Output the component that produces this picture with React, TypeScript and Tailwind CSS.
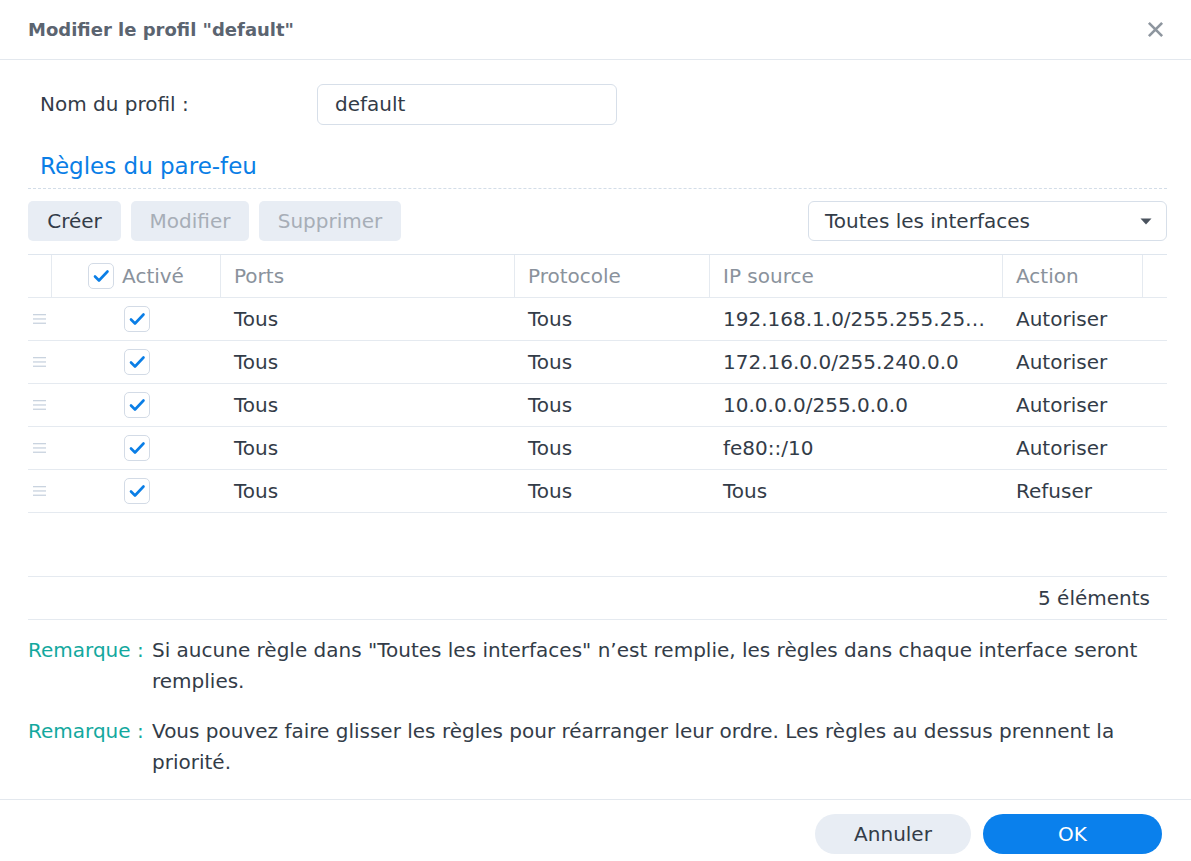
import React from "react";

const rows = [
  { ip: "192.168.1.0/255.255.25…", action: "Autoriser" },
  { ip: "172.16.0.0/255.240.0.0", action: "Autoriser" },
  { ip: "10.0.0.0/255.0.0.0", action: "Autoriser" },
  { ip: "fe80::/10", action: "Autoriser" },
  { ip: "Tous", action: "Refuser" },
];

function Check() {
  return (
    <span className="flex h-[26px] w-[26px] items-center justify-center rounded-[5px] border border-[#d3dbe6] bg-white">
      <svg width="18" height="18" viewBox="0 0 18 18">
        <path d="M3 9.5 L7 13.5 L15.5 4.5" fill="none" stroke="#0a7ee6" strokeWidth="2.6" strokeLinecap="round" strokeLinejoin="round" />
      </svg>
    </span>
  );
}

function Grip() {
  return (
    <svg width="14" height="12" viewBox="0 0 14 12">
      <rect x="0" y="1" width="13" height="1.3" fill="#c9d3df" />
      <rect x="0" y="5.3" width="13" height="1.3" fill="#c9d3df" />
      <rect x="0" y="9.6" width="13" height="1.3" fill="#c9d3df" />
    </svg>
  );
}

export default function App() {
  return (
    <div
      className="flex h-[861px] w-[1191px] flex-col bg-white text-[20px] text-[#333c48]"
      style={{ fontFamily: '"DejaVu Sans", Verdana, sans-serif' }}
    >
      {/* header */}
      <div className="flex h-[60px] shrink-0 items-center justify-between border-b border-[#e3e8ee] pl-[28px] pr-[27px]">
        <div className="text-[18px] font-bold text-[#5b6470]">Modifier le profil "default"</div>
        <svg width="17" height="17" viewBox="0 0 18 18">
          <path d="M3 3 L15 15 M15 3 L3 15" stroke="#8e969f" strokeWidth="2.8" strokeLinecap="square" />
        </svg>
      </div>

      {/* body */}
      <div className="flex flex-1 flex-col pl-[28px] pr-[24px]">
        <div className="mt-[24px] flex h-[40px] items-center">
          <div className="w-[289px] pl-[12px] text-[#333c48]">Nom du profil :</div>
          <div className="flex h-[41px] w-[300px] items-center rounded-[6px] border border-[#d7dfe9] px-[17px]">
            default
          </div>
        </div>

        <div className="mt-[20px] flex h-[45px] items-center border-b border-dashed border-[#d3dde8] pl-[12px] text-[23px] text-[#0a7ee6]">
          Règles du pare-feu
        </div>

        <div className="mt-[12px] flex h-[40px] items-center">
          <div className="flex h-[40px] w-[93px] items-center justify-center rounded-[5px] bg-[#e8edf4] text-[#333c48]">Créer</div>
          <div className="ml-[10px] flex h-[40px] w-[118px] items-center justify-center rounded-[5px] bg-[#e8edf4] text-[#a7aeb7]">Modifier</div>
          <div className="ml-[10px] flex h-[40px] w-[142px] items-center justify-center rounded-[5px] bg-[#e8edf4] text-[#a7aeb7]">Supprimer</div>
          <div className="ml-auto flex h-[40px] w-[359px] items-center justify-between rounded-[6px] border border-[#d7dfe9] pl-[16px] pr-[14px]">
            <span>Toutes les interfaces</span>
            <svg width="12" height="7" viewBox="0 0 12 7">
              <path d="M0.5 0.5 L11.5 0.5 L6 6.5 Z" fill="#4a535e" />
            </svg>
          </div>
        </div>

        {/* table */}
        <div className="mt-[13px] border-t border-[#dfe6ee]">
          <div className="flex h-[43px] items-center border-b border-[#e5eaf0] text-[#8a929c]">
            <div className="h-full w-[24px] border-r border-[#e5eaf0]" />
            <div className="flex h-full w-[169px] items-center justify-center gap-[8px] border-r border-[#e5eaf0]">
              <Check />
              <span>Activé</span>
            </div>
            <div className="flex h-full w-[294px] items-center border-r border-[#e5eaf0] pl-[13px]">Ports</div>
            <div className="flex h-full w-[195px] items-center border-r border-[#e5eaf0] pl-[13px]">Protocole</div>
            <div className="flex h-full w-[293px] items-center border-r border-[#e5eaf0] pl-[13px]">IP source</div>
            <div className="flex h-full w-[140px] items-center border-r border-[#e5eaf0] pl-[13px]">Action</div>
            <div className="flex-1" />
          </div>
          {rows.map((r, i) => (
            <div key={i} className="flex h-[43px] items-center border-b border-[#e5eaf0]">
              <div className="flex h-full w-[25px] items-center pl-[5px]">
                <Grip />
              </div>
              <div className="flex h-full w-[168px] items-center justify-center">
                <Check />
              </div>
              <div className="w-[294px] pl-[13px]">Tous</div>
              <div className="w-[195px] pl-[13px]">Tous</div>
              <div className="w-[293px] pl-[13px]">{r.ip}</div>
              <div className="pl-[13px]">{r.action}</div>
            </div>
          ))}
        </div>

        <div className="mt-[63px] flex h-[44px] items-center justify-end border-y border-[#e5eaf0] pr-[17px]">
          5 éléments
        </div>

        <div className="mt-[15px] flex flex-col gap-[19px] leading-[31px]">
          <div className="flex">
            <div className="w-[124px] shrink-0 text-[#13a89e]">Remarque :</div>
            <div>Si aucune règle dans "Toutes les interfaces" n’est remplie, les règles dans chaque interface seront remplies.</div>
          </div>
          <div className="flex">
            <div className="w-[124px] shrink-0 text-[#13a89e]">Remarque :</div>
            <div>Vous pouvez faire glisser les règles pour réarranger leur ordre. Les règles au dessus prennent la priorité.</div>
          </div>
        </div>
      </div>

      {/* footer */}
      <div className="flex h-[62px] shrink-0 items-start justify-end gap-[12px] border-t border-[#e3e8ee] pr-[29px] pt-[14px]">
        <div className="flex h-[40px] w-[156px] items-center justify-center rounded-full bg-[#e8edf4] text-[#333c48]">Annuler</div>
        <div className="flex h-[40px] w-[179px] items-center justify-center rounded-full bg-[#0a80ec] text-white">OK</div>
      </div>
    </div>
  );
}
